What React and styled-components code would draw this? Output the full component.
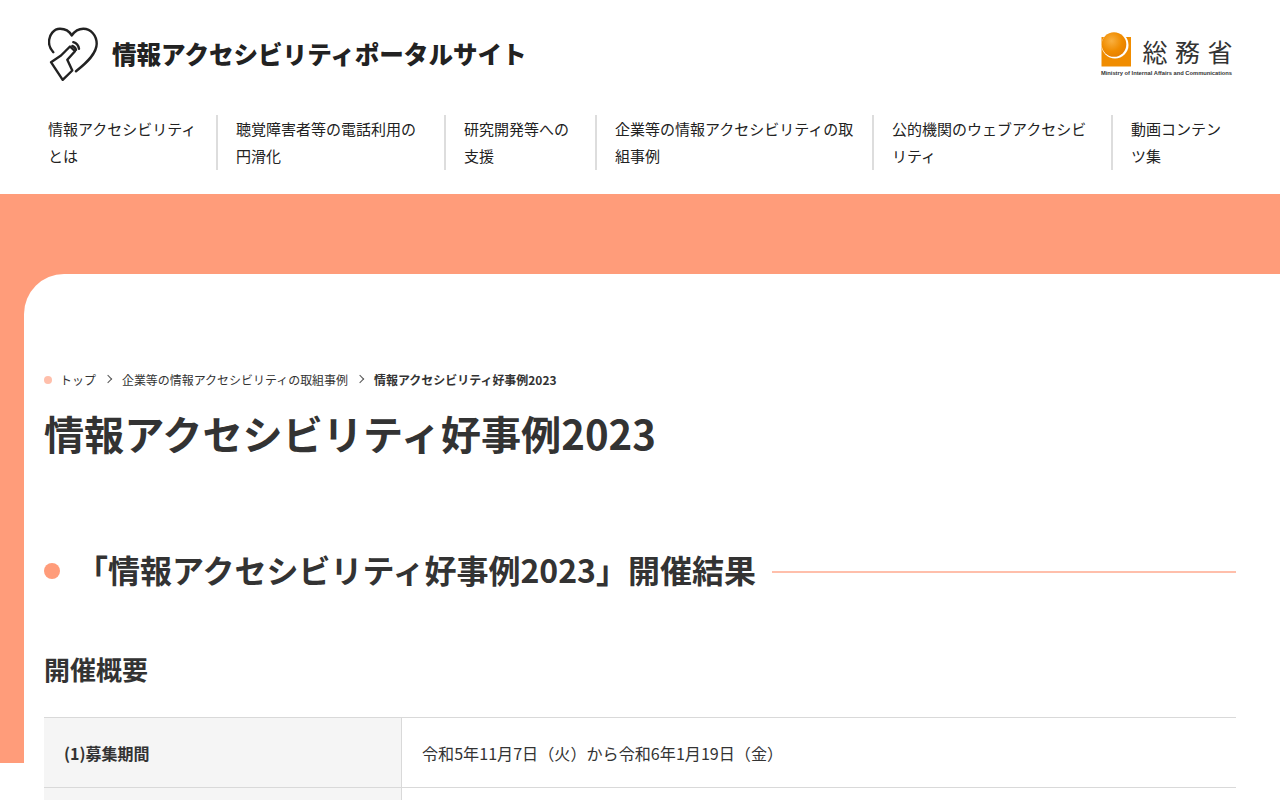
import React from 'react';
import styled, { createGlobalStyle } from 'styled-components';

const GlobalStyle = createGlobalStyle`
  html, body {
    margin: 0;
    padding: 0;
    background: #fff;
    color: #333;
    font-family: "Noto Sans CJK JP", "Noto Sans", sans-serif;
  }
  * { box-sizing: border-box; }
`;

const Header = styled.header`
  height: 194px;
  padding: 0 48px;
  background: #fff;
`;

const TopRow = styled.div`
  display: flex;
  justify-content: space-between;
  align-items: center;
  height: 108px;
  margin-bottom: 7px;
`;

const Brand = styled.a`
  display: flex;
  align-items: center;
  gap: 12px;
  color: #222;
  font-size: 24.55px;
  font-weight: 900;
  text-decoration: none;
`;

const BrandText = styled.span`
  margin-bottom: 2px;
`;

const Ministry = styled.div`
  display: flex;
  flex-direction: column;
  align-items: flex-end;
  gap: 2px;
`;

const MinistryTop = styled.div`
  display: flex;
  justify-content: space-between;
  width: 131px;
  height: 35px;
`;

const MinistryName = styled.span`
  align-self: flex-end;
  margin: 0 -8px 4px 0;
  font-size: 25px;
  line-height: 24px;
  letter-spacing: 7.500px;
  color: #333;
`;

const MinistryEn = styled.span`
  font-family: "Liberation Sans", sans-serif;
  font-size: 5.760px;
  font-weight: 700;
  line-height: 8px;
  color: #333;
  white-space: nowrap;
`;

const Nav = styled.nav`
  display: flex;
  align-items: stretch;
`;

const NavItem = styled.a`
  display: block;
  width: ${p => p.$w}px;
  min-height: 55px;
  padding: 0 ${p => (p.$last ? 0 : 16)}px 0 ${p => (p.$first ? 0 : 18)}px;
  border-right: ${p => (p.$last ? 'none' : '2px solid #ddd')};
  font-size: 15px;
  line-height: 27px;
  color: #222;
  text-decoration: none;
`;

const Backdrop = styled.div`
  background: linear-gradient(#ff9c7a, #ff9c7a) no-repeat left top / 100% 569px;
  padding: 80px 0 0 24px;
`;

const Main = styled.main`
  background: #fff;
  border-top-left-radius: 40px;
  padding: 90px 44px 40px 20px;
`;

const Breadcrumb = styled.ol`
  display: flex;
  align-items: center;
  list-style: none;
  margin: 0;
  padding: 0;
  height: 30px;
  font-size: 11.970px;
  color: #333;
`;

const Crumb = styled.li`
  display: flex;
  align-items: center;
  font-weight: ${p => (p.$current ? 700 : 400)};
  &::before {
    content: '';
    display: ${p => (p.$home ? 'block' : 'none')};
    width: 8px;
    height: 8px;
    border-radius: 50%;
    background: #ffbfab;
    margin: 2px 8px 0 0;
  }
`;

const Chevron = styled.span`
  width: 6px;
  height: 6px;
  margin: 0 11px 0 9px;
  border-top: 1px solid #555;
  border-right: 1px solid #555;
  transform: rotate(45deg);
`;

const PageTitle = styled.h1`
  margin: 9px 0 0;
  font-size: 40.130px;
  line-height: 60px;
  font-weight: 700;
  color: #333;
`;

const SectionTitle = styled.h2`
  display: flex;
  align-items: center;
  margin: 82px 0 0;
  font-size: 32px;
  line-height: 48px;
  font-weight: 700;
  color: #333;
  &::before {
    content: '';
    flex: none;
    width: 16px;
    height: 16px;
    margin: 4px 16px 0 0;
    border-radius: 50%;
    background: #ff9c7a;
  }
  &::after {
    content: '';
    flex: 1;
    height: 2px;
    margin: 6px 0 0 16px;
    background: #ffbfab;
  }
`;

const SubTitle = styled.h3`
  margin: 56px 0 0;
  font-size: 26px;
  line-height: 39px;
  font-weight: 700;
  color: #333;
`;

const InfoTable = styled.div`
  display: grid;
  grid-template-columns: 358px 1fr;
  margin-top: 29px;
  border-top: 1px solid #d9d9d9;
`;

const Th = styled.div`
  display: flex;
  align-items: center;
  min-height: 70px;
  padding: 0 20px;
  background: #f5f5f5;
  border-right: 1px solid #d9d9d9;
  border-bottom: 1px solid #d9d9d9;
  font-size: 16px;
  font-weight: 700;
`;

const Td = styled.div`
  display: flex;
  align-items: center;
  min-height: 70px;
  padding: 0 20px;
  border-bottom: 1px solid #d9d9d9;
  font-size: 16.100px;
`;

const HeartLogo = () => (
  <svg width="52" height="56" viewBox="2 -0.500 52 56" fill="none" stroke="#222" strokeWidth="2.400" strokeLinecap="round" strokeLinejoin="round">
    <path d="M7.300 25.700C4.500 22.500 3 19 3 15.700C3 8 8 2.300 14 2.300C19 2.300 23.500 5 25.700 9C28.500 5 32.500 2.300 37.300 2.300C45 2.300 50.700 9 50.700 17.300C50.700 27 41 36 30 44.700" />
    <path d="M5 35.700L15 29L24 20L29 24.700L21.300 33.300L26.300 44L16.700 53.300Z" />
    <path d="M26.300 19.500C28 20 29.500 21.500 30 23.300" />
    <path d="M27.300 15.700C30 16.500 32.500 19 33 22.300" />
  </svg>
);

const MicLogo = () => (
  <svg width="31" height="35" viewBox="0 0 31 35">
    <defs>
      <radialGradient id="sphere" cx="0.4" cy="0.35" r="0.7">
        <stop offset="0" stopColor="#f9b040" />
        <stop offset="0.6" stopColor="#f08c00" />
        <stop offset="1" stopColor="#e67e00" />
      </radialGradient>
    </defs>
    <rect x="0.500" y="5" width="29.500" height="29.500" fill="#f08c00" />
    <circle cx="14" cy="13" r="13.500" fill="#fff" />
    <circle cx="13" cy="12.500" r="12.300" fill="url(#sphere)" />
  </svg>
);

const navItems = [
  { label: '情報アクセシビリティとは', w: 170 },
  { label: '聴覚障害者等の電話利用の円滑化', w: 228 },
  { label: '研究開発等への支援', w: 151 },
  { label: '企業等の情報アクセシビリティの取組事例', w: 277 },
  { label: '公的機関のウェブアクセシビリティ', w: 239 },
  { label: '動画コンテンツ集', w: 119 },
];

export default function App() {
  return (
    <>
      <GlobalStyle />
      <Header>
        <TopRow>
          <Brand href="#">
            <HeartLogo />
            <BrandText>情報アクセシビリティポータルサイト</BrandText>
          </Brand>
          <Ministry>
            <MinistryTop>
              <MicLogo />
              <MinistryName>総務省</MinistryName>
            </MinistryTop>
            <MinistryEn>Ministry of Internal Affairs and Communications</MinistryEn>
          </Ministry>
        </TopRow>
        <Nav>
          {navItems.map((item, i) => (
            <NavItem key={item.label} href="#" $w={item.w} $first={i === 0} $last={i === navItems.length - 1}>
              {item.label}
            </NavItem>
          ))}
        </Nav>
      </Header>
      <Backdrop>
        <Main>
          <Breadcrumb>
            <Crumb $home>トップ</Crumb>
            <Chevron />
            <Crumb>企業等の情報アクセシビリティの取組事例</Crumb>
            <Chevron />
            <Crumb $current>情報アクセシビリティ好事例2023</Crumb>
          </Breadcrumb>
          <PageTitle>情報アクセシビリティ好事例2023</PageTitle>
          <SectionTitle>「情報アクセシビリティ好事例2023」開催結果</SectionTitle>
          <SubTitle>開催概要</SubTitle>
          <InfoTable>
            <Th>(1)募集期間</Th>
            <Td>令和5年11月7日（火）から令和6年1月19日（金）</Td>
            <Th />
            <Td />
          </InfoTable>
        </Main>
      </Backdrop>
    </>
  );
}
